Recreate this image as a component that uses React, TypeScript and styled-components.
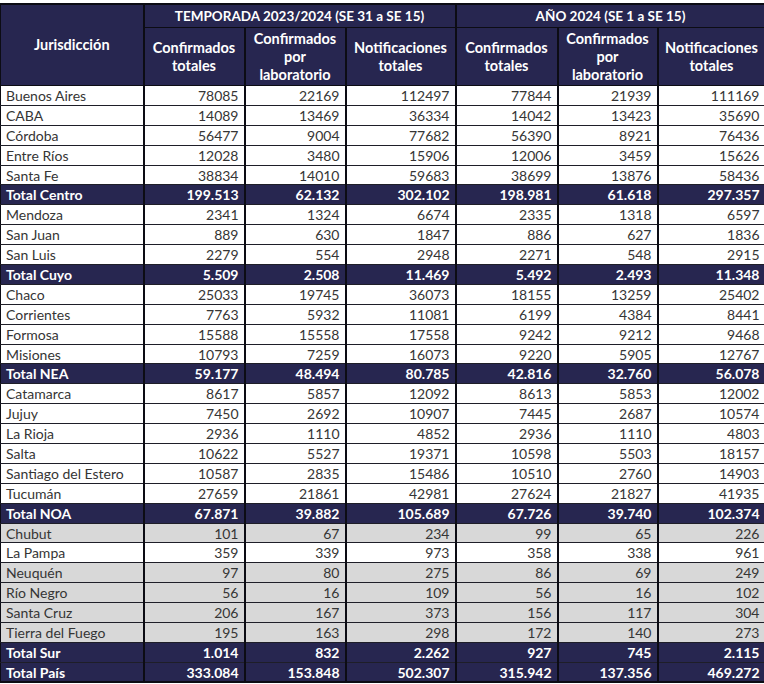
import React from "react";
import styled, { createGlobalStyle } from "styled-components";

const Global = createGlobalStyle`
  html, body { margin: 0; padding: 0; background: #ffffff; }
  body { font-family: Lato, "Open Sans", "Liberation Sans", sans-serif; }
`;

const Page = styled.div`
  padding-top: 3px;
  width: 764px;
`;

const Table = styled.table`
  width: 764px;
  border-collapse: collapse;
  table-layout: fixed;
  font-family: Lato, "Open Sans", "Liberation Sans", sans-serif;
  border-top: 2px solid #0c0c14;
  border-bottom: 2px solid #0c0c14;
`;

const HeadCell = styled.th<{ $h: number }>`
  background: #272650;
  color: #ffffff;
  font-weight: 700;
  font-size: 14.5px;
  line-height: 18px;
  text-align: center;
  height: ${(p) => p.$h}px;
  padding: 0 2px;
  border-left: 2px solid #0c0c14;
  border-right: 2px solid #0c0c14;
  border-bottom: 1px solid #0c0c14;
  &:first-child { border-left: 1px solid #0c0c14; }
  &:last-child { border-right: none; }
`;

const GroupCell = styled(HeadCell)`
  font-size: 13.5px;
`;

type Kind = "white" | "gray" | "total";

const Row = styled.tr<{ $kind: Kind }>`
  height: 19.9px;
  background: ${(p) =>
    p.$kind === "total" ? "#272650" : p.$kind === "gray" ? "#d8d8d8" : "#ffffff"};
  color: ${(p) => (p.$kind === "total" ? "#ffffff" : "#353535")};
  font-weight: ${(p) => (p.$kind === "total" ? 700 : 400)};
`;

const NameCell = styled.td`
  font-size: 14px;
  line-height: 17px;
  padding: 0 5px;
  text-align: left;
  white-space: nowrap;
  border-left: 1px solid #0c0c14;
  border-right: 2px solid #0c0c14;
  border-top: 1px solid #1e1e28;
  border-bottom: 1px solid #1e1e28;
`;

const NumCell = styled.td`
  font-size: 14px;
  line-height: 17px;
  padding: 0 5px;
  text-align: right;
  white-space: nowrap;
  border-left: 2px solid #0c0c14;
  border-right: 2px solid #0c0c14;
  border-top: 1px solid #1e1e28;
  border-bottom: 1px solid #1e1e28;
  &:last-child { border-right: none; }
`;

type R = [string, Kind, string[]];

const rows: R[] = [
  ["Buenos Aires", "white", ["78085", "22169", "112497", "77844", "21939", "111169"]],
  ["CABA", "white", ["14089", "13469", "36334", "14042", "13423", "35690"]],
  ["Córdoba", "white", ["56477", "9004", "77682", "56390", "8921", "76436"]],
  ["Entre Ríos", "white", ["12028", "3480", "15906", "12006", "3459", "15626"]],
  ["Santa Fe", "white", ["38834", "14010", "59683", "38699", "13876", "58436"]],
  ["Total Centro", "total", ["199.513", "62.132", "302.102", "198.981", "61.618", "297.357"]],
  ["Mendoza", "white", ["2341", "1324", "6674", "2335", "1318", "6597"]],
  ["San Juan", "white", ["889", "630", "1847", "886", "627", "1836"]],
  ["San Luis", "white", ["2279", "554", "2948", "2271", "548", "2915"]],
  ["Total Cuyo", "total", ["5.509", "2.508", "11.469", "5.492", "2.493", "11.348"]],
  ["Chaco", "white", ["25033", "19745", "36073", "18155", "13259", "25402"]],
  ["Corrientes", "white", ["7763", "5932", "11081", "6199", "4384", "8441"]],
  ["Formosa", "white", ["15588", "15558", "17558", "9242", "9212", "9468"]],
  ["Misiones", "white", ["10793", "7259", "16073", "9220", "5905", "12767"]],
  ["Total NEA", "total", ["59.177", "48.494", "80.785", "42.816", "32.760", "56.078"]],
  ["Catamarca", "white", ["8617", "5857", "12092", "8613", "5853", "12002"]],
  ["Jujuy", "white", ["7450", "2692", "10907", "7445", "2687", "10574"]],
  ["La Rioja", "white", ["2936", "1110", "4852", "2936", "1110", "4803"]],
  ["Salta", "white", ["10622", "5527", "19371", "10598", "5503", "18157"]],
  ["Santiago del Estero", "white", ["10587", "2835", "15486", "10510", "2760", "14903"]],
  ["Tucumán", "white", ["27659", "21861", "42981", "27624", "21827", "41935"]],
  ["Total NOA", "total", ["67.871", "39.882", "105.689", "67.726", "39.740", "102.374"]],
  ["Chubut", "gray", ["101", "67", "234", "99", "65", "226"]],
  ["La Pampa", "white", ["359", "339", "973", "358", "338", "961"]],
  ["Neuquén", "gray", ["97", "80", "275", "86", "69", "249"]],
  ["Río Negro", "gray", ["56", "16", "109", "56", "16", "102"]],
  ["Santa Cruz", "gray", ["206", "167", "373", "156", "117", "304"]],
  ["Tierra del Fuego", "gray", ["195", "163", "298", "172", "140", "273"]],
  ["Total Sur", "total", ["1.014", "832", "2.262", "927", "745", "2.115"]],
  ["Total País", "total", ["333.084", "153.848", "502.307", "315.942", "137.356", "469.272"]],
];

const widths = [143, 101, 101, 110, 102, 100, 107];

const subHeads = [
  ["Confirmados", "totales"],
  ["Confirmados", "por", "laboratorio"],
  ["Notificaciones", "totales"],
];

const Lines = ({ parts }: { parts: string[] }) => (
  <>
    {parts.map((p, i) => (
      <React.Fragment key={i}>
        {i > 0 && <br />}
        {p}
      </React.Fragment>
    ))}
  </>
);

export default function App() {
  return (
    <Page>
      <Global />
      <Table>
        <colgroup>
          {widths.map((w, i) => (
            <col key={i} style={{ width: w }} />
          ))}
        </colgroup>
        <thead>
          <tr>
            <HeadCell $h={22} rowSpan={2}>Jurisdicción</HeadCell>
            <GroupCell $h={22} colSpan={3}>TEMPORADA 2023/2024 (SE 31 a SE 15)</GroupCell>
            <GroupCell $h={22} colSpan={3}>AÑO 2024 (SE 1 a SE 15)</GroupCell>
          </tr>
          <tr>
            {[0, 1].flatMap((g) =>
              subHeads.map((s, i) => (
                <HeadCell $h={57} key={`${g}-${i}`}>
                  <Lines parts={s} />
                </HeadCell>
              ))
            )}
          </tr>
        </thead>
        <tbody>
          {rows.map(([name, kind, vals]) => (
            <Row key={name} $kind={kind}>
              <NameCell>{name}</NameCell>
              {vals.map((v, i) => (
                <NumCell key={i}>{v}</NumCell>
              ))}
            </Row>
          ))}
        </tbody>
      </Table>
    </Page>
  );
}
